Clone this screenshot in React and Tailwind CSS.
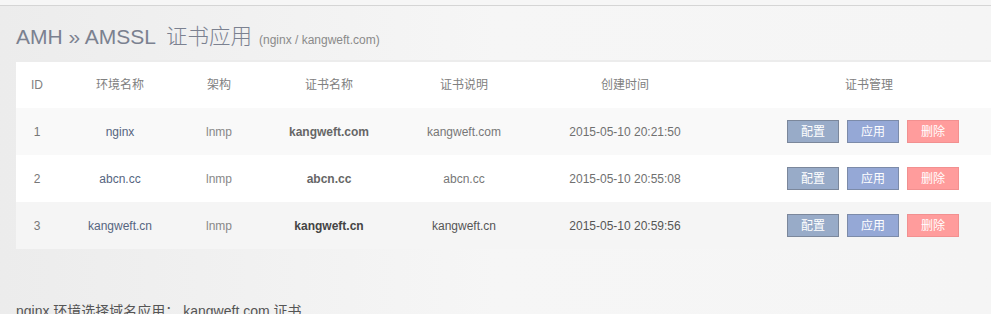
const rows = [
  { id: 1, env: 'nginx', arch: 'lnmp', name: 'kangweft.com', desc: 'kangweft.com', time: '2015-05-10 20:21:50', bg: 'bg-[#f9f9f9]', dark: false },
  { id: 2, env: 'abcn.cc', arch: 'lnmp', name: 'abcn.cc', desc: 'abcn.cc', time: '2015-05-10 20:55:08', bg: 'bg-white', dark: false },
  { id: 3, env: 'kangweft.cn', arch: 'lnmp', name: 'kangweft.cn', desc: 'kangweft.cn', time: '2015-05-10 20:59:56', bg: 'bg-[#f5f5f5]', dark: true },
]

export default function App() {
  return (
    <div
      className="w-[991px] h-[314px] overflow-hidden bg-gradient-to-r from-[#ececec] via-[#f6f6f6] to-[#f5f5f5] text-[12px] text-[#777]"
      style={{ fontFamily: '"Liberation Sans", Arial, "Noto Sans CJK SC", sans-serif' }}
    >
      <div className="h-[6px] bg-[#f6f6f6] border-b border-[#d5d5d5]" />

      <div className="pl-4 pt-[17px]">
        <h1 className="text-[21px] leading-[28px] text-[#7b8190] font-normal whitespace-nowrap">
          AMH » AMSSL <span className="ml-[5px] text-[21.5px] font-light">证书应用</span>{' '}
          <span className="ml-[1px] text-[12px] text-[#8a8a8a]">(nginx / kangweft.com)</span>
        </h1>

        <div className="mt-[6px] w-[1000px] border-t-2 border-[#ececec]">
          <table className="w-full table-fixed border-collapse">
            <colgroup>
              <col className="w-[42px]" />
              <col className="w-[124px]" />
              <col className="w-[74px]" />
              <col className="w-[146px]" />
              <col className="w-[124px]" />
              <col className="w-[198px]" />
              <col />
            </colgroup>
            <thead>
              <tr className="bg-white h-[46px] text-[#808080]">
                <th className="font-normal text-center">ID</th>
                <th className="font-normal text-center">环境名称</th>
                <th className="font-normal text-center">架构</th>
                <th className="font-normal text-center">证书名称</th>
                <th className="font-normal text-center">证书说明</th>
                <th className="font-normal text-center">创建时间</th>
                <th className="font-normal text-left pl-[121px]">证书管理</th>
              </tr>
            </thead>
            <tbody>
              {rows.map(r => (
                <tr key={r.id} className={`${r.bg} h-[47px]`}>
                  <td className="text-center text-[#777]">{r.id}</td>
                  <td className="text-center text-[#56657f]">{r.env}</td>
                  <td className="text-center text-[#888]">{r.arch}</td>
                  <td className={`text-center font-bold ${r.dark ? 'text-[#444]' : 'text-[#666]'}`}>{r.name}</td>
                  <td className={`text-center ${r.dark ? 'text-[#555]' : 'text-[#777]'}`}>{r.desc}</td>
                  <td className={`text-center ${r.dark ? 'text-[#555]' : 'text-[#707070]'}`}>{r.time}</td>
                  <td className="pl-[63px]">
                    <div className="flex gap-[8px]">
                      <button className="w-[52px] h-[23px] bg-[#98abc8] border border-[#7b879b] text-white text-[12px] leading-none">配置</button>
                      <button className="w-[52px] h-[23px] bg-[#95a8d6] border border-[#7c8ba9] text-white text-[12px] leading-none">应用</button>
                      <button className="w-[52px] h-[23px] bg-[#ff9c9c] border border-[#f29090] text-white text-[12px] leading-none">删除</button>
                    </div>
                  </td>
                </tr>
              ))}
            </tbody>
          </table>
        </div>

        <p className="mt-[52px] text-[14px] text-[#555] whitespace-nowrap">
          nginx 环境选择域名应用： kangweft.com 证书
        </p>
      </div>
    </div>
  )
}
